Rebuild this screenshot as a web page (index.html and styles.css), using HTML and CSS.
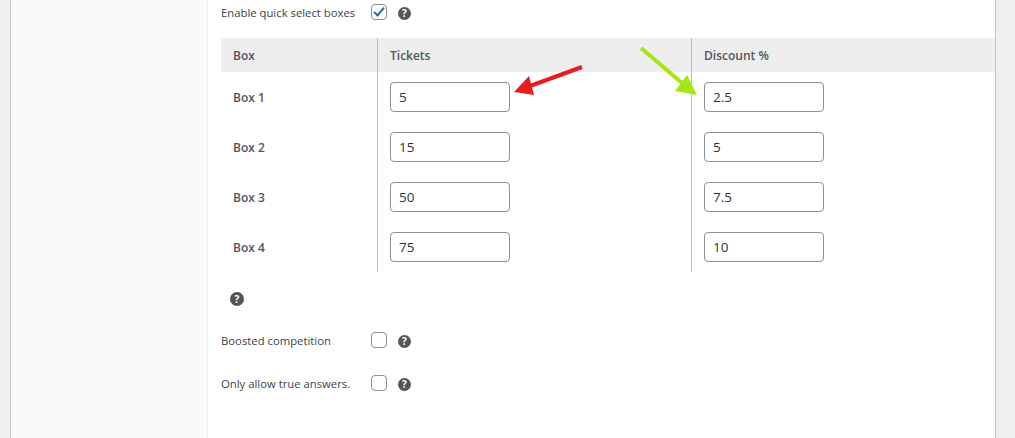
FILE: index.html
```html
<!DOCTYPE html>
<html lang="en">
<head>
  <meta charset="UTF-8">
  <title>Competition settings</title>
  <link rel="stylesheet" href="styles.css">
</head>
<body>
  <div class="settings">
    <div class="sidebar"></div>
    <div class="panel">
      <!-- Quick select -->
      <div class="field first">
        <label class="field-label">Enable quick select boxes</label>
        <input type="checkbox" checked>
        <span class="help">?</span>
      </div>

      <table class="boxes">
        <thead>
          <tr>
            <th>Box</th>
            <th>Tickets</th>
            <th>Discount %</th>
          </tr>
        </thead>
        <tbody>
          <tr>
            <th>Box 1</th>
            <td><input type="text" value="5"></td>
            <td><input type="text" value="2.5"></td>
          </tr>
          <tr>
            <th>Box 2</th>
            <td><input type="text" value="15"></td>
            <td><input type="text" value="5"></td>
          </tr>
          <tr>
            <th>Box 3</th>
            <td><input type="text" value="50"></td>
            <td><input type="text" value="7.5"></td>
          </tr>
          <tr>
            <th>Box 4</th>
            <td><input type="text" value="75"></td>
            <td><input type="text" value="10"></td>
          </tr>
        </tbody>
      </table>

      <div class="table-help"><span class="help">?</span></div>

      <div class="field boosted">
        <label class="field-label">Boosted competition</label>
        <input type="checkbox">
        <span class="help">?</span>
      </div>
      <div class="field answers">
        <label class="field-label">Only allow true answers.</label>
        <input type="checkbox">
        <span class="help">?</span>
      </div>
    </div>
  </div>

  <!-- Arrows drawn over the screenshot -->
  <svg class="arrows" width="1015" height="438" viewBox="0 0 1015 438">
    <line x1="582" y1="67" x2="530" y2="86" stroke="#ea1c1f" stroke-width="4"/>
    <polygon points="514,92 529,76 534,95" fill="#ea1c1f"/>
    <line x1="641" y1="48" x2="682" y2="83" stroke="#a6e616" stroke-width="4"/>
    <polygon points="697,95 687,75 675,91" fill="#a6e616"/>
  </svg>
</body>
</html>
```

FILE: styles.css
```css
/* Global styles */
html, body {
  height: 100%;
}

body {
  margin: 0;
  padding: 0 19px 0 10px;
  background-color: #f0f0f1;
  font-family: "Open Sans", Arial, sans-serif;
  font-size: 12px;
  color: #3c434a;
  overflow: hidden;
}

.settings {
  display: flex;
  height: 438px;
  border-left: 1px solid #c3c4c7;
  border-right: 1px solid #c3c4c7;
}

.sidebar {
  width: 196px;
  background-color: #fafafa;
  border-right: 1px solid #eeeeee;
}

.panel {
  flex: 1;
  padding-left: 13px;
  background-color: #ffffff;
}

/* Label, checkbox and help icon rows */
.field {
  display: flex;
  align-items: center;
  height: 16px;
}

.field.first {
  padding-top: 4px;
  margin-bottom: 18px;
}

.field.boosted {
  margin-top: 26px;
}

.field.answers {
  margin-top: 27px;
}

.field-label {
  width: 150px;
  font-size: 11.3px;
}

.field .help {
  margin-top: 2px;
}

.field input[type="checkbox"] {
  appearance: none;
  position: relative;
  width: 16px;
  height: 16px;
  margin: 0 11px 0 0;
  background-color: #ffffff;
  border: 1px solid #8c8f94;
  border-radius: 4px;
}

.field input[type="checkbox"]:checked::before {
  content: "";
  position: absolute;
  left: 4px;
  top: 0;
  width: 4px;
  height: 9px;
  border-right: 2.5px solid #2271b1;
  border-bottom: 2.5px solid #2271b1;
  transform: rotate(40deg);
}

.help {
  display: inline-block;
  width: 13px;
  height: 13px;
  border-radius: 50%;
  background-color: #555555;
  color: #ffffff;
  font-size: 10px;
  font-weight: 700;
  line-height: 13px;
  text-align: center;
}

.table-help {
  display: flex;
  padding: 20px 0 0 9px;
  height: 14px;
}

.table-help .help {
  width: 14px;
  height: 14px;
  line-height: 14px;
}

/* Quick select table */
.boxes {
  width: 774px;
  table-layout: fixed;
  border-collapse: separate;
  border-spacing: 0;
}

.boxes th,
.boxes td {
  padding: 0 12px;
  text-align: left;
  font-size: 12px;
  font-weight: 600;
  color: #50575e;
}

.boxes th:first-child {
  width: 132px;
  border-right: 1px solid #bbbbbb;
}

.boxes td:nth-child(2),
.boxes thead th:nth-child(2) {
  width: 289px;
  border-right: 1px solid #bbbbbb;
}

.boxes thead th {
  height: 34px;
  background-color: #eeeeee;
}

.boxes tbody tr {
  height: 50px;
}

.boxes input {
  display: block;
  box-sizing: border-box;
  width: 120px;
  height: 30px;
  padding: 0 8px;
  background-color: #ffffff;
  border: 1px solid #8c8f94;
  border-radius: 4px;
  font-family: "Open Sans", Arial, sans-serif;
  font-size: 13.5px;
  color: #2c3338;
}

/* Arrows sit on top of everything */
.arrows {
  position: absolute;
  left: 0;
  top: 0;
  pointer-events: none;
}
```
